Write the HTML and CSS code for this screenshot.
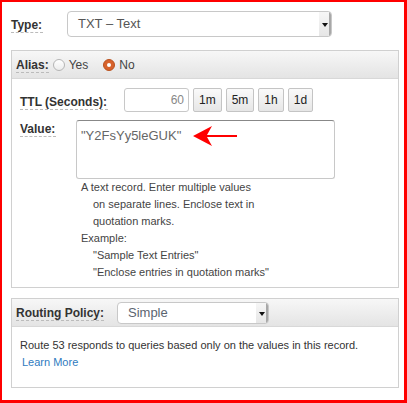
FILE: index.html
```html
<!DOCTYPE html>
<html>
<head>
<meta charset="utf-8">
<link rel="stylesheet" href="styles.css">
</head>
<body>
<div class="frame">
  <div class="type-row">
    <span class="lbl type-lbl">Type:</span>
    <div class="select type-select"><span class="sel-text">TXT – Text</span><span class="sel-arrow"></span></div>
  </div>

  <div class="panel alias-panel">
    <div class="panel-head">
      <span class="lbl">Alias:</span>
      <span class="radio"><span class="dot"></span>Yes</span>
      <span class="radio radio-no"><span class="dot on"></span>No</span>
    </div>
    <div class="panel-body alias-body">
      <div class="ttl-row">
        <span class="lbl ttl-lbl">TTL (Seconds):</span>
        <div class="ttl-input">60</div>
        <div class="btns">
          <span class="btn">1m</span>
          <span class="btn">5m</span>
          <span class="btn">1h</span>
          <span class="btn">1d</span>
        </div>
      </div>
      <div class="value-row">
        <span class="lbl value-lbl">Value:</span>
        <div class="textarea">"Y2FsYy5leGUK"
          <svg class="arrow" width="46" height="22" viewBox="0 0 46 22"><path d="M0 11 L19 1 L14 10 L44 10 L44 12 L14 12 L19 21 Z" fill="#f00"/></svg>
        </div>
      </div>
      <div class="help">
        <div>A text record. Enter multiple values</div>
        <div class="ind">on separate lines. Enclose text in</div>
        <div class="ind">quotation marks.</div>
        <div>Example:</div>
        <div class="ind">"Sample Text Entries"</div>
        <div class="ind">"Enclose entries in quotation marks"</div>
      </div>
    </div>
  </div>

  <div class="panel routing-panel">
    <div class="panel-head routing-head">
      <span class="lbl routing-lbl">Routing Policy:</span>
      <div class="select routing-select"><span class="sel-text simple">Simple</span><span class="sel-arrow"></span></div>
    </div>
    <div class="panel-body routing-body">
      <div>Route 53 responds to queries based only on the values in this record.</div>
      <div class="learn">Learn More</div>
    </div>
  </div>
</div>
</body>
</html>
```
FILE: styles.css
```css
* { box-sizing: border-box; }
html, body { margin: 0; padding: 0; background: #fff; }
body { font-family: "Liberation Sans", Arial, sans-serif; color: #333; font-size: 12px; }

.frame {
  width: 407px;
  height: 403px;
  border: 2px solid #f00;
  border-right-width: 3px;
  border-bottom-width: 3px;
  padding: 9px 0 0 9px;
}

.lbl {
  font-weight: bold;
  color: #333;
  font-size: 12px;
  line-height: 14px;
  border-bottom: 1px dashed #bbb;
  white-space: nowrap;
  flex-shrink: 0;
}

.type-row {
  display: flex;
  align-items: center;
  height: 26px;
}
.type-lbl { width: 32px; margin-right: 24px; margin-top: 2px; }

.select {
  display: flex;
  align-items: stretch;
  background: #fff;
  border: 1px solid #c8c8c8;
  border-radius: 4px;
  overflow: hidden;
  flex-shrink: 0;
}
.type-select { width: 265px; height: 26px; }
.sel-text {
  flex: 1;
  color: #555;
  font-size: 13px;
  line-height: 24px;
  padding-left: 10px;
}
.sel-arrow {
  width: 12px;
  background: linear-gradient(#f6f6f6, #e6e6e6);
  box-shadow: inset -2px 0 0 #a8a8a8;
  position: relative;
}
.sel-arrow::after {
  content: "";
  position: absolute;
  left: 3px;
  top: 50%;
  margin-top: -1px;
  border-left: 3px solid transparent;
  border-right: 3px solid transparent;
  border-top: 4px solid #111;
}

.panel {
  width: 388px;
  border: 1px solid #d0d0d0;
  background: #fff;
}
.alias-panel { margin-top: 13px; height: 238px; }
.routing-panel { margin-top: 10px; height: 90px; }

.panel-head {
  height: 28px;
  display: flex;
  align-items: center;
  padding-left: 4px;
  background: linear-gradient(#f7f7f7, #e4e4e4);
  border-bottom: 1px solid #d8d8d8;
}
.panel-head .lbl { margin-top: 1px; }

.radio {
  display: flex;
  align-items: center;
  color: #444;
  font-size: 12px;
  margin-left: 4px;
}
.radio-no { margin-left: 15px; }
.dot {
  width: 12px;
  height: 12px;
  border-radius: 50%;
  border: 1px solid #b5b5b5;
  background: linear-gradient(#fff, #ececec);
  margin-right: 4px;
  position: relative;
}
.dot.on {
  border-color: #b9521f;
  background: #d7622c;
}
.dot.on::after {
  content: "";
  position: absolute;
  left: 3px;
  top: 3px;
  width: 4px;
  height: 4px;
  border-radius: 50%;
  background: #fff;
}

.alias-body { padding: 8px 0 0 8px; }
.ttl-row {
  display: flex;
  align-items: center;
  height: 25px;
}
.ttl-lbl { width: 88px; margin-right: 16px; margin-top: 6px; }
.ttl-input {
  flex-shrink: 0;
  width: 65px;
  height: 24px;
  margin-top: 1px;
  border: 1px solid #c8c8c8;
  border-radius: 3px;
  text-align: right;
  color: #888;
  font-size: 12px;
  line-height: 22px;
  padding-right: 4px;
}
.btns { display: flex; gap: 4px; margin-left: 4px; }
.btn {
  height: 24px;
  padding: 0 5px;
  border: 1px solid #c4c4c4;
  border-radius: 2px;
  background: linear-gradient(#fafafa, #e6e6e6);
  color: #222;
  font-size: 12px;
  line-height: 22px;
}

.value-row {
  display: flex;
  align-items: flex-start;
  margin-top: 8px;
}
.value-lbl { width: 36px; margin-right: 20px; margin-top: 2px; }
.textarea {
  position: relative;
  width: 259px;
  height: 59px;
  border: 1px solid #c8c8c8;
  border-top-color: #888;
  border-radius: 3px;
  color: #666;
  font-size: 13px;
  line-height: 15px;
  padding: 7px 4px;
}
.arrow {
  position: absolute;
  left: 116px;
  top: 4px;
}

.help {
  margin: 0 0 0 61px;
  font-size: 11px;
  line-height: 17px;
  color: #444;
}
.help .ind { padding-left: 12px; }

.routing-head { padding-left: 4px; }
.routing-lbl { width: 88px; margin-right: 13px; }
.routing-select { width: 152px; height: 22px; }
.routing-select .sel-text { line-height: 20px; font-size: 13px; color: #5b6470; }

.routing-body {
  padding: 10px 0 0 8px;
  font-size: 11px;
  line-height: 17px;
  color: #333;
}
.learn { color: #2f7bc0; padding-left: 2px; }
```
